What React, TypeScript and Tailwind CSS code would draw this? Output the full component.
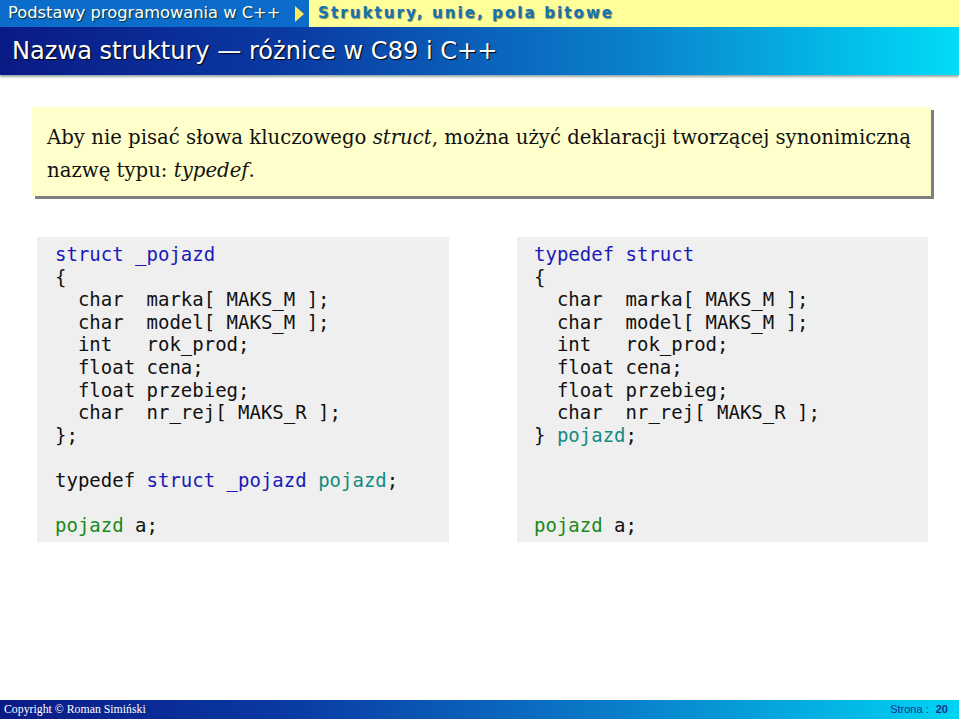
import React from "react";

const mono = { fontFamily: '"DejaVu Sans Mono", monospace' } as React.CSSProperties;

function Line({ children }: { children?: React.ReactNode }) {
  return <div className="h-[22.6px] whitespace-pre leading-[22.6px]">{children ?? " "}</div>;
}

const B = ({ children }: { children: React.ReactNode }) => <span className="text-[#1a1ab8]">{children}</span>;
const T = ({ children }: { children: React.ReactNode }) => <span className="text-[#138a80]">{children}</span>;
const G = ({ children }: { children: React.ReactNode }) => <span className="text-[#1a8a1a]">{children}</span>;

export default function App() {
  return (
    <div className="w-[959px] h-[719px] bg-white flex flex-col overflow-hidden">
      {/* top bar */}
      <div className="h-[27px] flex items-stretch">
        <div className="w-[309px] bg-[#0c6ccb] flex items-center pl-[8px] gap-[15px]">
          <span
            className="text-white text-[16.3px] leading-none [text-shadow:1px_1px_1px_#033]"
            style={{ fontFamily: '"DejaVu Sans", sans-serif' }}
          >
            Podstawy programowania w C++
          </span>
          <svg width="9" height="16" viewBox="0 0 9 16">
            <polygon points="0,0 9,8 0,16" fill="#ffe95c" />
          </svg>
        </div>
        <div className="flex-1 bg-[#ffff99] flex items-center pl-[9px]">
          <span
            className="text-[#1472b5] text-[15px] font-bold leading-none tracking-[2.1px] [text-shadow:1px_1px_1px_#8a8a55]"
            style={{ fontFamily: '"DejaVu Sans", sans-serif' }}
          >
            Struktury, unie, pola bitowe
          </span>
        </div>
      </div>
      {/* title bar */}
      <div className="h-[48px] bg-[linear-gradient(90deg,#0a1a86_0%,#0a3aa2_30%,#0a7ecb_65%,#00dcf8_100%)] flex items-center pl-[12px] shadow-[0_2px_2px_#9aa]">
        <span
          className="text-white text-[24.1px] leading-none [text-shadow:1px_1px_1px_#001]"
          style={{ fontFamily: '"DejaVu Sans", sans-serif' }}
        >
          Nazwa struktury — różnice w C89 i C++
        </span>
      </div>

      {/* yellow note */}
      <div className="mt-[32px] ml-[32px] w-[899px] h-[89px] bg-[#ffffcc] shadow-[3px_3px_0_#7f7f7f] pl-[15px] pt-[14px]">
        <p
          className="text-[19.7px] leading-[33px] text-[#111]"
          style={{ fontFamily: '"DejaVu Serif", serif' }}
        >
          Aby nie pisać słowa kluczowego <i>struct</i>, można użyć deklaracji tworzącej synonimiczną
          <br />
          nazwę typu: <i>typedef</i>.
        </p>
      </div>

      {/* code boxes */}
      <div className="mt-[41px] ml-[37px] flex gap-[68px]">
        <div className="w-[412px] h-[305px] bg-[#efefef] pl-[18px] pt-[6px] text-[19px] text-[#111]" style={mono}>
          <Line><B>struct _pojazd</B></Line>
          <Line>{"{"}</Line>
          <Line>{"  char  marka[ MAKS_M ];"}</Line>
          <Line>{"  char  model[ MAKS_M ];"}</Line>
          <Line>{"  int   rok_prod;"}</Line>
          <Line>{"  float cena;"}</Line>
          <Line>{"  float przebieg;"}</Line>
          <Line>{"  char  nr_rej[ MAKS_R ];"}</Line>
          <Line>{"};"}</Line>
          <Line />
          <Line>
            typedef <B>struct _pojazd</B> <T>pojazd</T>;
          </Line>
          <Line />
          <Line>
            <G>pojazd</G> a;
          </Line>
        </div>
        <div className="w-[411px] h-[305px] bg-[#efefef] pl-[17px] pt-[6px] text-[19px] text-[#111]" style={mono}>
          <Line><B>typedef struct</B></Line>
          <Line>{"{"}</Line>
          <Line>{"  char  marka[ MAKS_M ];"}</Line>
          <Line>{"  char  model[ MAKS_M ];"}</Line>
          <Line>{"  int   rok_prod;"}</Line>
          <Line>{"  float cena;"}</Line>
          <Line>{"  float przebieg;"}</Line>
          <Line>{"  char  nr_rej[ MAKS_R ];"}</Line>
          <Line>
            {"} "}
            <T>pojazd</T>;
          </Line>
          <Line />
          <Line />
          <Line />
          <Line>
            <G>pojazd</G> a;
          </Line>
        </div>
      </div>

      <div className="flex-1" />

      {/* footer */}
      <div className="h-[19px] bg-[linear-gradient(90deg,#0a1a86_0%,#0a3aa2_30%,#0a7ecb_65%,#00d4f4_100%)] flex items-center justify-between pl-[4px] pr-[11px]">
        <span className="text-white text-[11.8px] leading-none" style={{ fontFamily: '"Liberation Serif", serif' }}>
          Copyright © Roman Simiński
        </span>
        <span className="text-[#1b2e8e] text-[11px] leading-none" style={{ fontFamily: '"Liberation Sans", sans-serif' }}>
          Strona : <span className="font-bold ml-[4px]">20</span>
        </span>
      </div>
    </div>
  );
}
